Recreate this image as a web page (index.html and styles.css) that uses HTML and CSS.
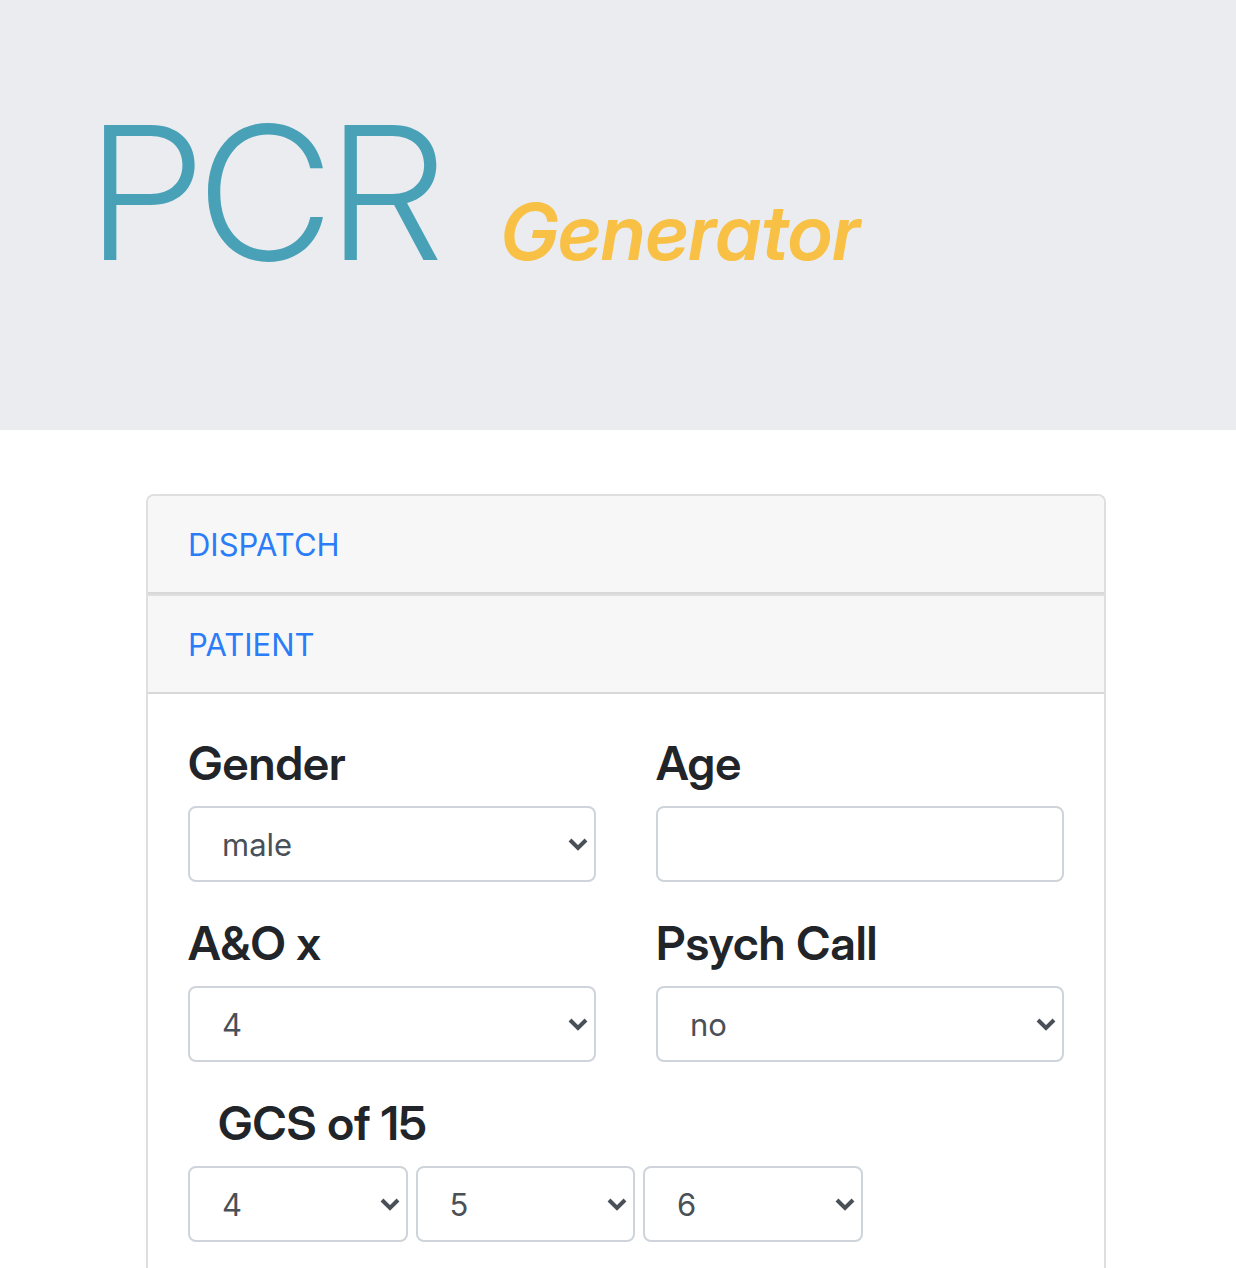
FILE: index.html
```html
<!DOCTYPE html>
<html lang="en">
<head>
<meta charset="utf-8">
<title>PCR Generator</title>
<link rel="stylesheet" href="styles.css">
</head>
<body>
<header class="hero">
  <h1 class="brand"><span class="brand-main">PCR</span> <em class="brand-sub">Generator</em></h1>
</header>
<main class="accordion">
  <section class="card">
    <h2 class="card-header"><a class="card-link" href="#dispatch">DISPATCH</a></h2>
  </section>
  <section class="card">
    <h2 class="card-header"><a class="card-link" href="#patient">PATIENT</a></h2>
    <form class="card-body" id="patient">
      <div class="row">
        <div class="field">
          <label class="label" for="gender">Gender</label>
          <div class="select"><select class="control" id="gender"><option>male</option><option>female</option></select><svg class="chevron" viewBox="0 0 20 14"><path d="M2 2l8 8 8-8"/></svg></div>
        </div>
        <div class="field">
          <label class="label" for="age">Age</label>
          <input class="control" id="age" type="text">
        </div>
      </div>
      <div class="row">
        <div class="field">
          <label class="label" for="ao">A&amp;O x</label>
          <div class="select"><select class="control" id="ao"><option>4</option><option>3</option><option>2</option><option>1</option></select><svg class="chevron" viewBox="0 0 20 14"><path d="M2 2l8 8 8-8"/></svg></div>
        </div>
        <div class="field">
          <label class="label" for="psych">Psych Call</label>
          <div class="select"><select class="control" id="psych"><option>no</option><option>yes</option></select><svg class="chevron" viewBox="0 0 20 14"><path d="M2 2l8 8 8-8"/></svg></div>
        </div>
      </div>
      <fieldset class="gcs">
        <legend class="label gcs-label">GCS of 15</legend>
        <div class="gcs-row">
          <div class="select"><select class="control" aria-label="Eye"><option>4</option><option>3</option></select><svg class="chevron" viewBox="0 0 20 14"><path d="M2 2l8 8 8-8"/></svg></div>
          <div class="select"><select class="control" aria-label="Verbal"><option>5</option><option>4</option></select><svg class="chevron" viewBox="0 0 20 14"><path d="M2 2l8 8 8-8"/></svg></div>
          <div class="select"><select class="control" aria-label="Motor"><option>6</option><option>5</option></select><svg class="chevron" viewBox="0 0 20 14"><path d="M2 2l8 8 8-8"/></svg></div>
        </div>
      </fieldset>
    </form>
  </section>
</main>
</body>
</html>
```
FILE: styles.css
```css
* { box-sizing: border-box; }
body {
  margin: 0;
  background: #fff;
  color: #212529;
  font-family: Inter, "Liberation Sans", sans-serif;
  font-size: 31px;
  line-height: 48px;
}
.hero {
  padding: 73px 90px 117px;
  background: #eaecef;
}
.brand {
  display: flex;
  align-items: baseline;
  gap: 56px;
  margin: 0;
  font-family: "Inter Display", Inter, sans-serif;
  line-height: 240px;
}
.brand-main {
  color: #49a1b7;
  font-size: 186px;
  font-weight: 300;
}
.brand-sub {
  color: #f8c146;
  font-size: 78px;
  font-weight: 600;
  line-height: 96px;
}
.accordion {
  margin: 64px 130px 0 146px;
  border: 2px solid #dfdfdf;
  border-bottom: 0;
  border-radius: 8px 8px 0 0;
  overflow: hidden;
}
.card + .card { border-top: 2px solid #dfdfdf; }
.card-header {
  margin: 0;
  padding: 25px 40px 23px;
  border-bottom: 2px solid #d8d8d8;
  background: #f7f7f7;
  font-size: 31px;
  font-weight: 400;
}
.card-link {
  color: #2a7df6;
  text-decoration: none;
}
.card-body { padding: 41px 40px 40px; }
.row {
  display: grid;
  grid-template-columns: 1fr 1fr;
  gap: 60px;
  margin-bottom: 33px;
}
.label {
  display: block;
  margin-bottom: 15px;
  padding: 0;
  font-family: "Inter Display", Inter, sans-serif;
  font-size: 47px;
  font-weight: 600;
  line-height: 56px;
}
.select { position: relative; }
.control {
  display: block;
  width: 100%;
  height: 76px;
  padding: 13px 32px 11px;
  border: 2px solid #ced4da;
  border-radius: 8px;
  background: #fff;
  color: #495057;
  font: inherit;
  appearance: none;
}
.chevron {
  position: absolute;
  top: 32px;
  right: 8px;
  width: 20px;
  height: 14px;
  fill: none;
  stroke: #495057;
  stroke-width: 4;
  pointer-events: none;
}
.gcs {
  min-width: 0;
  margin: 0;
  padding: 0;
  border: 0;
}
.gcs-label { padding-left: 30px; }
.gcs-row {
  display: grid;
  grid-template-columns: repeat(3, 1fr);
  gap: 8px;
  width: 77%;
}
```
